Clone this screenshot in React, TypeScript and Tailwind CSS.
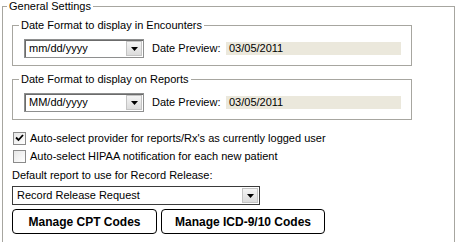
import React from "react"

function Arrow() {
    return (
        <svg width="7" height="4" viewBox="0 0 7 4">
            <path d="M0 0H7L3.5 4Z" fill="#000" />
        </svg>
    )
}

function Combo({ value, width, dark }: { value: string; width: string; dark?: boolean }) {
    return (
        <div className={`${width} h-[19px] flex bg-white border ${dark ? "border-[#3a3a3a]" : "border-[#8e8f8f] shadow-[inset_1px_1px_0_#6b6b6b]"}`}>
            <div className="flex-1 flex items-center pl-[4px] leading-[13px]">{value}</div>
            <div className="w-[16px] m-[1px] flex items-center justify-center bg-gradient-to-b from-[#f4f4f4] to-[#dcdcdc] border border-[#c4c4c4]">
                <Arrow />
            </div>
        </div>
    )
}

function DateBox({ title, format }: { title: string; format: string }) {
    return (
        <fieldset className="w-[400px] border border-[#a7a6a0] pl-[11px] pt-[7px] pb-[7px]">
            <legend className="-ml-[5px] px-[2px] leading-[13px]">{title}</legend>
            <div className="flex items-center">
                <Combo value={format} width="w-[120px]" />
                <span className="ml-[8px] w-[74px] leading-[13px]">Date Preview:</span>
                <div className="w-[175px] h-[13px] bg-[#ebe8dc] pl-[3px] leading-[13px]">03/05/2011</div>
            </div>
        </fieldset>
    )
}

function Check({ checked, label }: { checked?: boolean; label: string }) {
    return (
        <div className="h-[18px] flex items-center pl-[1px]">
            <div className="w-[13px] h-[13px] border border-[#8a8a8a] bg-gradient-to-br from-[#e6e6e6] to-white flex items-center justify-center">
                {checked && (
                    <svg width="9" height="8" viewBox="0 0 9 8">
                        <path d="M1 3.5L3.5 6L8 1" stroke="#000" strokeWidth="1.8" fill="none" />
                    </svg>
                )}
            </div>
            <span className="ml-[4px] leading-[13px]">{label}</span>
        </div>
    )
}

export default function App() {
    return (
        <div className="w-[459px] h-[242px] bg-white text-black text-[11px] font-['Liberation_Sans',Arial,sans-serif]">
            <fieldset className="ml-[2px] w-[453px] border border-[#a7a6a0] pl-[9px] pt-[6px] pb-[8px]">
                <legend className="-ml-[5px] px-[2px] leading-[13px]">General Settings</legend>
                <DateBox title="Date Format to display in Encounters" format="mm/dd/yyyy" />
                <div className="mt-[7px]">
                    <DateBox title="Date Format to display on Reports" format="MM/dd/yyyy" />
                </div>
                <div className="mt-[9px]">
                    <Check checked label="Auto-select provider for reports/Rx's as currently logged user" />
                    <Check label="Auto-select HIPAA notification for each new patient" />
                </div>
                <div className="mt-[4px] leading-[13px]">Default report to use for Record Release:</div>
                <div className="mt-[4px]">
                    <Combo value="Record Release Request" width="w-[248px]" dark />
                </div>
                <div className="mt-[4px] flex gap-[4px]">
                    <button className="w-[145px] h-[25px] border border-black rounded-[4px] bg-white font-bold text-[12px]">
                        Manage CPT Codes
                    </button>
                    <button className="w-[164px] h-[25px] border border-black rounded-[4px] bg-white font-bold text-[12px]">
                        Manage ICD-9/10 Codes
                    </button>
                </div>
            </fieldset>
        </div>
    )
}
